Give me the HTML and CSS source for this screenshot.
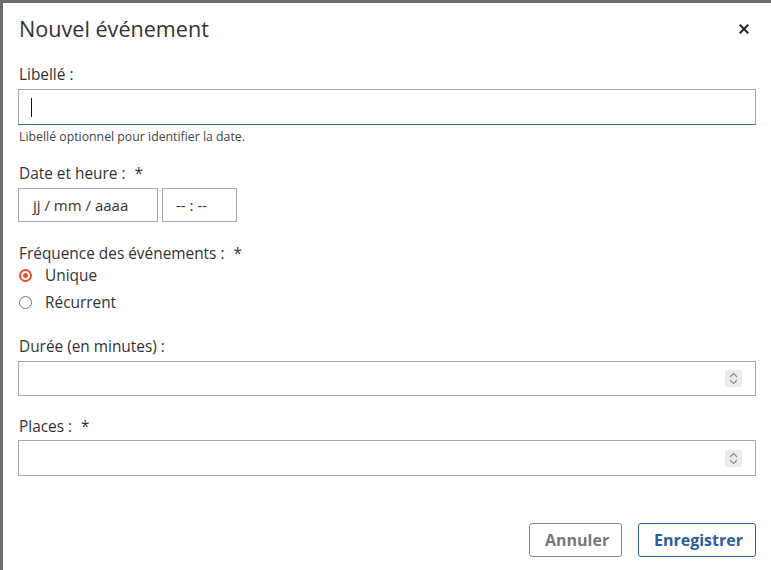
FILE: index.html
```html
<!DOCTYPE html>
<html lang="fr">
<head>
<meta charset="utf-8">
<title>Nouvel événement</title>
<link rel="stylesheet" href="styles.css">
</head>
<body>
<div class="modal">
  <div class="modal-header">
    <h1 class="modal-title">Nouvel événement</h1>
    <button class="close" type="button" aria-label="Fermer">
      <svg width="10" height="10" viewBox="0 0 10 10"><path d="M1.5 1.5 L8.5 8.5 M8.5 1.5 L1.5 8.5" stroke="#2d2d2d" stroke-width="2.2" stroke-linecap="square"/></svg>
    </button>
  </div>
  <form class="modal-body">
    <div class="group g-label">
      <label class="label">Libellé :</label>
      <div class="input focus"><span class="caret"></span></div>
      <p class="help">Libellé optionnel pour identifier la date.</p>
    </div>
    <div class="group g-date">
      <label class="label">Date et heure : <span class="req">*</span></label>
      <div class="datetime">
        <div class="input date">jj / mm / aaaa</div>
        <div class="input time">-- : --</div>
      </div>
    </div>
    <div class="group g-freq">
      <label class="label">Fréquence des événements : <span class="req">*</span></label>
      <div class="radios">
        <div class="radio"><span class="dot checked"></span>Unique</div>
        <div class="radio"><span class="dot"></span>Récurrent</div>
      </div>
    </div>
    <div class="group g-duree">
      <label class="label">Durée (en minutes) :</label>
      <div class="input number"><span class="spin"><svg width="9" height="13" viewBox="0 0 9 13"><path d="M1 5 L4.5 1.5 L8 5 M1 8 L4.5 11.5 L8 8" fill="none" stroke="#8a8a8a" stroke-width="1.1"/></svg></span></div>
    </div>
    <div class="group g-places">
      <label class="label">Places : <span class="req">*</span></label>
      <div class="input number"><span class="spin"><svg width="9" height="13" viewBox="0 0 9 13"><path d="M1 5 L4.5 1.5 L8 5 M1 8 L4.5 11.5 L8 8" fill="none" stroke="#8a8a8a" stroke-width="1.1"/></svg></span></div>
    </div>
    <div class="actions">
      <button type="button" class="btn cancel">Annuler</button>
      <button type="button" class="btn save">Enregistrer</button>
    </div>
  </form>
</div>
</body>
</html>
```

FILE: styles.css
```css
html, body {
  margin: 0;
  height: 100%;
}
body {
  background: #6d6d70;
  overflow: hidden;
  font-family: "Open Sans", "Noto Sans", sans-serif;
  color: #333;
}
.modal {
  margin: 3px 0 0 3px;
  background: #fff;
  height: 567px;
  overflow: hidden;
  box-sizing: border-box;
  padding: 0 15px;
}
.modal-header {
  display: flex;
  align-items: center;
  justify-content: space-between;
  padding-top: 11px;
  height: 30px;
}
.modal-title {
  margin: 0;
  font-size: 21.6px;
  font-weight: 400;
  line-height: 30px;
  color: #333;
  padding-left: 1px;
}
.close {
  border: 0;
  background: none;
  padding: 0;
  margin-right: 7px;
  display: flex;
  width: 10px;
  height: 10px;
}
.modal-body {
  display: flex;
  flex-direction: column;
  margin-top: 21px;
}
.group {
  display: flex;
  flex-direction: column;
}
.g-label { margin-bottom: 19px; }
.g-date { margin-bottom: 22px; }
.g-freq { margin-bottom: 21px; }
.g-duree { margin-bottom: 21px; }
.label {
  font-size: 15.4px;
  line-height: 20px;
  margin: 0 0 4px 1px;
  color: #333;
}
.g-places .label {
  margin-bottom: 3px;
}
.req {
  margin-left: 5px;
}
.input {
  box-sizing: border-box;
  height: 36px;
  border: 1px solid #a8a8a8;
  background: #fff;
  display: flex;
  align-items: center;
  font-size: 15px;
  color: #333;
}
.input.focus {
  border-bottom-color: #2f6a8f;
}
.caret {
  width: 1px;
  height: 19px;
  background: #111;
  margin-left: 12px;
}
.help {
  margin: 4px 0 0 1px;
  font-size: 12.3px;
  line-height: 16px;
  color: #444;
}
.datetime {
  display: flex;
  gap: 4px;
}
.input.date {
  width: 140px;
  height: 34px;
  padding-left: 14px;
}
.input.time {
  width: 75px;
  height: 34px;
  padding-left: 13px;
}
.radios {
  display: flex;
  flex-direction: column;
  margin-top: -6px;
}
.radio {
  display: flex;
  align-items: center;
  height: 27px;
  font-size: 15.4px;
  color: #333;
}
.dot {
  box-sizing: border-box;
  width: 13px;
  height: 13px;
  border-radius: 50%;
  border: 1.5px solid #777;
  margin: 0 13px 0 1px;
  display: flex;
  align-items: center;
  justify-content: center;
}
.dot.checked {
  border: 2px solid #e0522c;
}
.dot.checked::after {
  content: "";
  width: 5px;
  height: 5px;
  border-radius: 50%;
  background: #e0522c;
}
.input.number {
  justify-content: flex-end;
  padding-right: 13px;
}
.g-duree .input.number {
  height: 35px;
}
.spin {
  width: 17px;
  height: 17px;
  background: #ececec;
  display: flex;
  align-items: center;
  justify-content: center;
}
.actions {
  display: flex;
  justify-content: flex-end;
  gap: 16px;
  margin-top: 47px;
}
.btn {
  box-sizing: border-box;
  height: 34px;
  font-family: "Open Sans", "Noto Sans", sans-serif;
  font-weight: 700;
  font-size: 16px;
  background: #fff;
  border-radius: 3px;
  padding: 0 15px;
}
.btn.cancel {
  color: #777;
  border: 1px solid #888;
  width: 93px;
}
.btn.save {
  color: #2b5e9c;
  border: 1px solid #2b5e9c;
  width: 118px;
}
```
